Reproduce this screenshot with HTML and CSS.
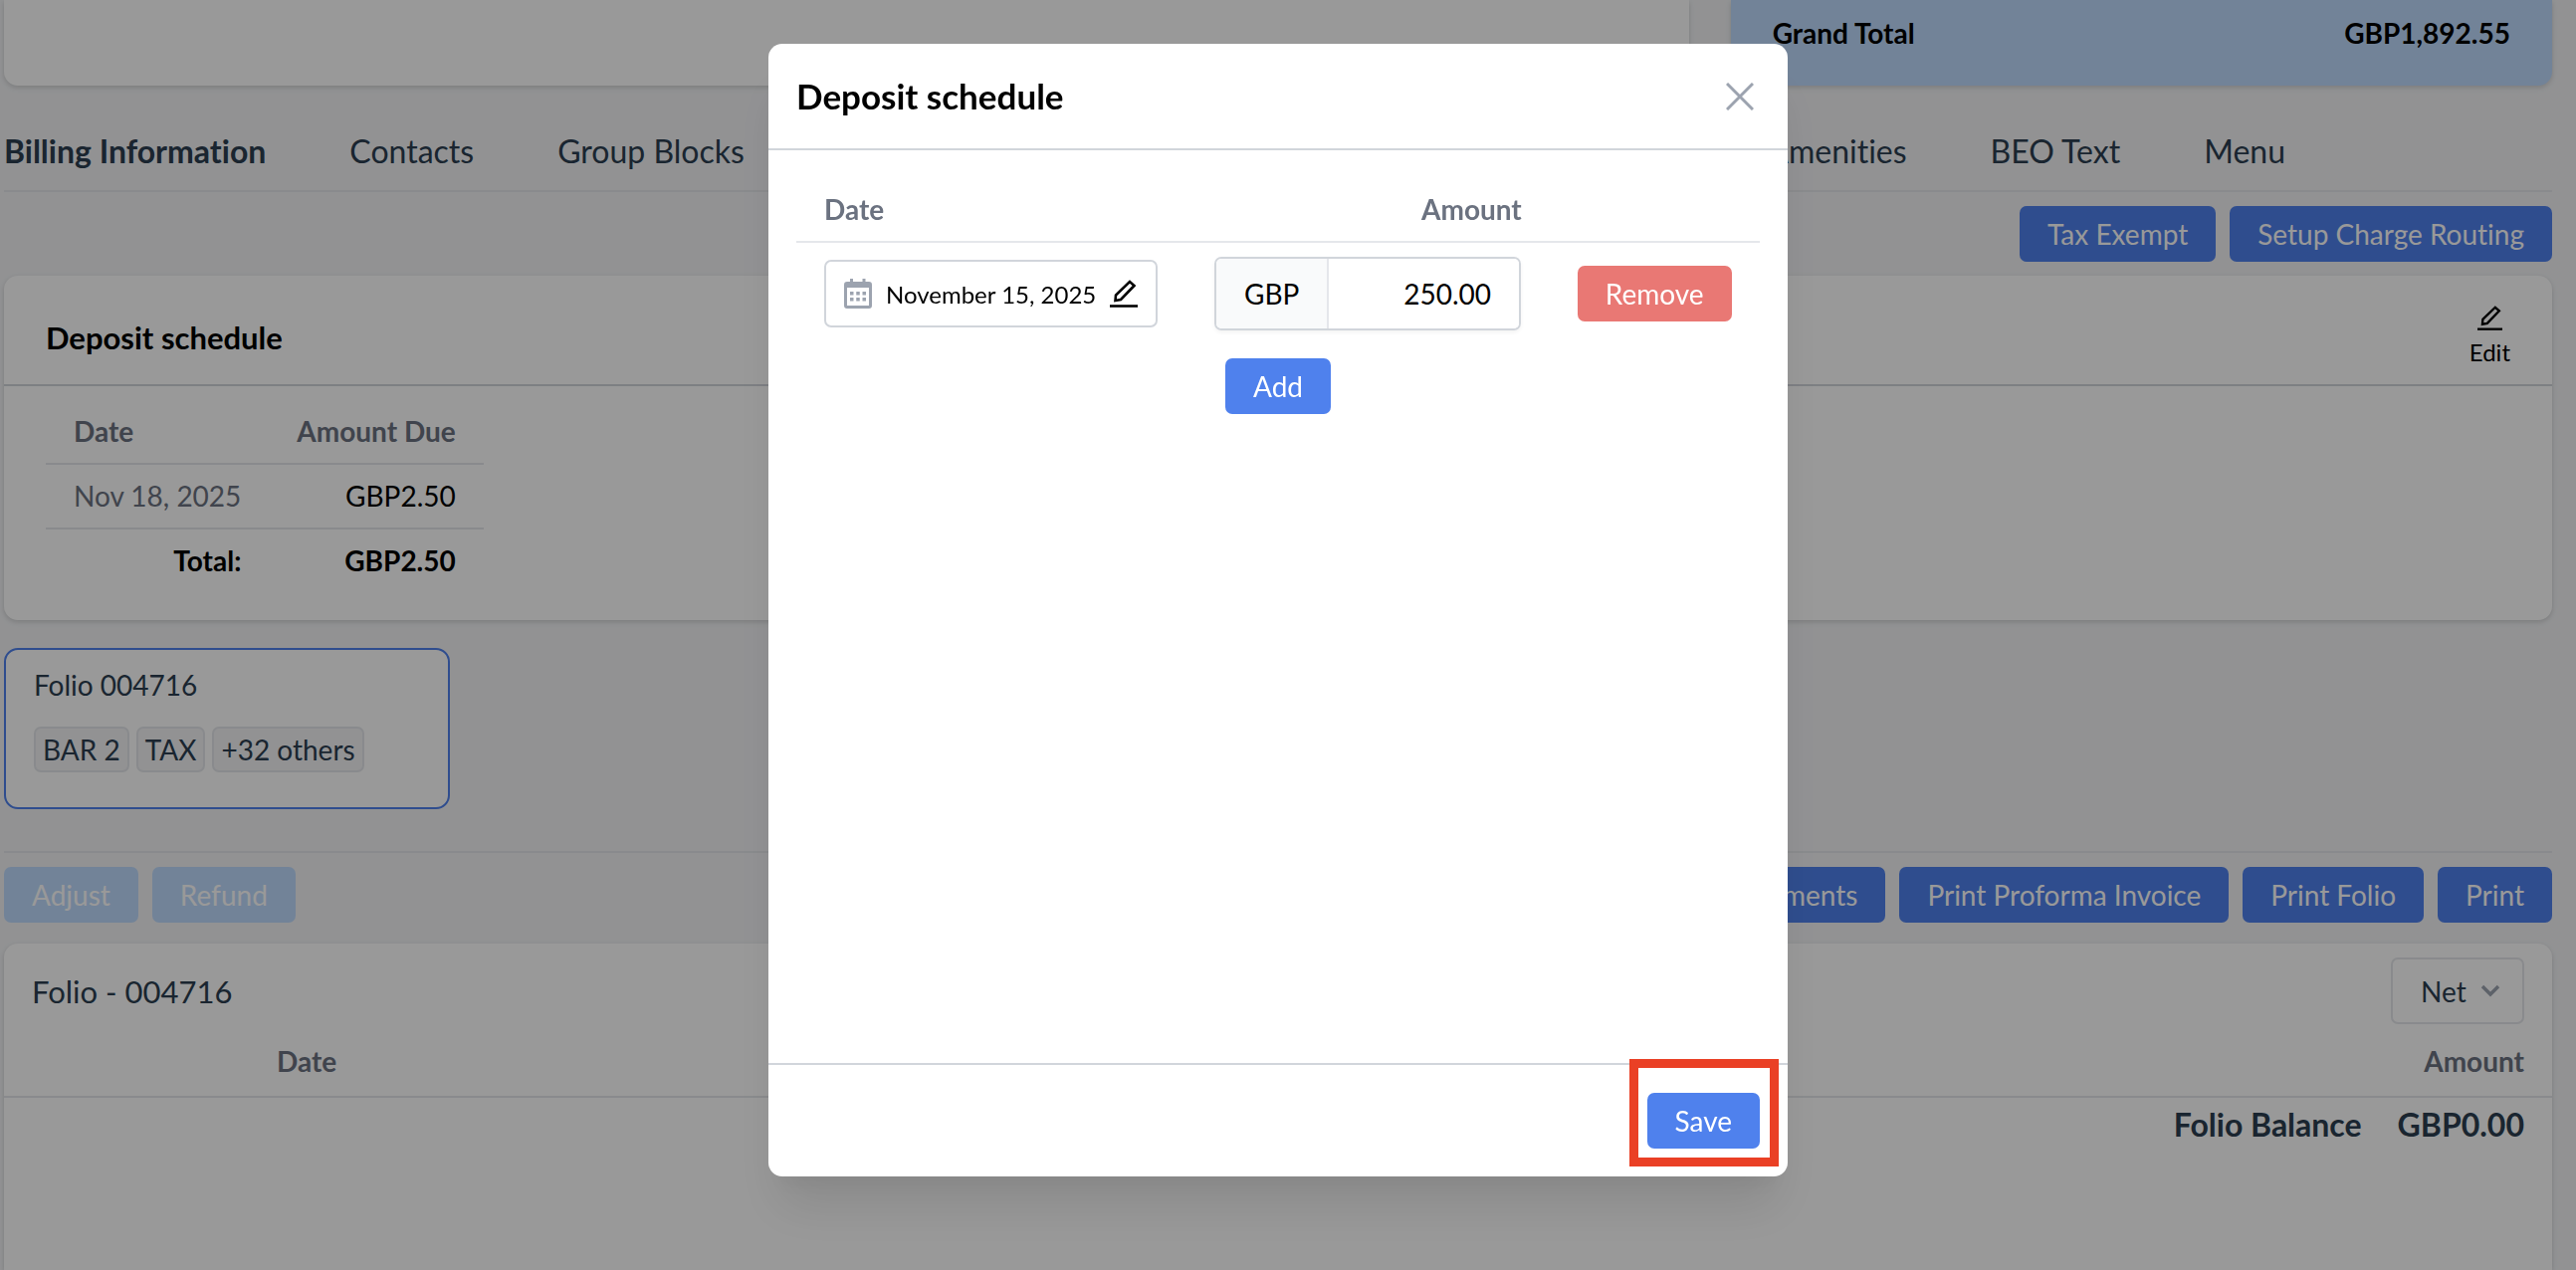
FILE: index.html
```html
<!DOCTYPE html>
<html lang="en">
<head>
    <meta charset="UTF-8">
    <meta name="viewport" content="width=device-width, initial-scale=1.0">
    <title>Billing Information</title>
    <link rel="stylesheet" href="styles.css">
</head>
<body>
    <main class="page">
        <section class="summary">
            <div class="card summary-main"></div>
            <div class="card summary-total">
                <span>Grand Total</span>
                <span>GBP1,892.55</span>
            </div>
        </section>

        <nav class="tabs">
            <div class="tab-group">
                <a href="#billing" class="tab active">Billing Information</a>
                <a href="#contacts" class="tab">Contacts</a>
                <a href="#blocks" class="tab">Group Blocks</a>
            </div>
            <div class="tab-group">
                <a href="#amenities" class="tab">Amenities</a>
                <a href="#beo" class="tab">BEO Text</a>
                <a href="#menu" class="tab">Menu</a>
            </div>
        </nav>

        <div class="actions">
            <button type="button" class="btn">Tax Exempt</button>
            <button type="button" class="btn">Setup Charge Routing</button>
        </div>

        <section class="card schedule">
            <header class="schedule-header">
                <h2>Deposit schedule</h2>
                <button type="button" class="edit-btn">
                    <svg class="icon small" viewBox="0 0 28 28" aria-hidden="true">
                        <path d="M5.500 21L6 15.500L20 2L24.500 6L11 20Z" fill="none" stroke="currentColor" stroke-width="2.600"/>
                        <path d="M0 26.500H28" stroke="currentColor" stroke-width="2.600"/>
                    </svg>
                    Edit
                </button>
            </header>
            <div class="schedule-body">
                <table class="table">
                    <thead>
                        <tr><th>Date</th><th class="right">Amount Due</th></tr>
                    </thead>
                    <tbody>
                        <tr><td class="muted">Nov 18, 2025</td><td class="right">GBP2.50</td></tr>
                        <tr class="total"><td class="right">Total:</td><td class="right">GBP2.50</td></tr>
                    </tbody>
                </table>
            </div>
        </section>

        <section class="folio-card">
            <span>Folio 004716</span>
            <div class="tags">
                <span class="tag">BAR 2</span>
                <span class="tag">TAX</span>
                <span class="tag">+32 others</span>
            </div>
        </section>

        <div class="actions folio-actions">
            <button type="button" class="btn" disabled>Adjust</button>
            <button type="button" class="btn push" disabled>Refund</button>
            <button type="button" class="btn">Payments</button>
            <button type="button" class="btn">Print Proforma Invoice</button>
            <button type="button" class="btn">Print Folio</button>
            <button type="button" class="btn">Print</button>
        </div>

        <section class="card folio">
            <header class="folio-header">
                <h3>Folio - 004716</h3>
                <div class="select-wrap">
                    <select class="select" aria-label="Price display">
                        <option>Net</option>
                    </select>
                    <svg class="chevron" viewBox="0 0 20 14" aria-hidden="true">
                        <path d="M2 2L10 10L18 2" fill="none" stroke="currentColor" stroke-width="3.400"/>
                    </svg>
                </div>
            </header>
            <table class="folio-table">
                <thead>
                    <tr><th>Date</th><th class="right">Amount</th></tr>
                </thead>
                <tbody>
                    <tr><td></td><td class="balance">Folio Balance<span class="balance-sum">GBP0.00</span></td></tr>
                </tbody>
            </table>
        </section>
    </main>

    <div class="overlay">
        <div class="modal" role="dialog" aria-labelledby="modal-title">
            <header class="modal-header">
                <h1 id="modal-title">Deposit schedule</h1>
                <button type="button" class="close-btn" aria-label="Close">
                    <svg class="icon" viewBox="0 0 28 28" aria-hidden="true">
                        <path d="M1 1L27 27M27 1L1 27" stroke="currentColor" stroke-width="3"/>
                    </svg>
                </button>
            </header>
            <div class="modal-body">
                <table class="table modal-table">
                    <thead>
                        <tr><th>Date</th><th class="right">Amount</th><th></th></tr>
                    </thead>
                    <tbody>
                        <tr>
                            <td>
                                <button type="button" class="date-btn">
                                    <svg class="icon calendar" viewBox="0 0 28 30" aria-hidden="true">
                                        <path fill="currentColor" fill-rule="evenodd" d="M6 0H9V3H18.500V0H21.500V3H25Q28 3 28 6V27Q28 30 25 30H3Q0 30 0 27V6Q0 3 3 3H6ZM3 9V27H25V9Z"/>
                                        <path fill="currentColor" d="M6 13H9.500V16.500H6ZM12.250 13H15.750V16.500H12.250ZM18.500 13H22V16.500H18.500ZM6 19H9.500V22.500H6ZM12.250 19H15.750V22.500H12.250ZM18.500 19H22V22.500H18.500Z"/>
                                    </svg>
                                    November 15, 2025
                                    <svg class="icon" viewBox="0 0 28 28" aria-hidden="true">
                                        <path d="M5.500 21L6 15.500L20 2L24.500 6L11 20Z" fill="none" stroke="currentColor" stroke-width="2.600"/>
                                        <path d="M0 26.500H28" stroke="currentColor" stroke-width="2.600"/>
                                    </svg>
                                </button>
                            </td>
                            <td>
                                <div class="money">
                                    <label for="amount" class="currency">GBP</label>
                                    <input id="amount" type="text" value="250.00">
                                </div>
                            </td>
                            <td><button type="button" class="btn danger">Remove</button></td>
                        </tr>
                    </tbody>
                </table>
                <button type="button" class="btn add">Add</button>
            </div>
            <footer class="modal-footer">
                <div class="highlight">
                    <button type="button" class="btn">Save</button>
                </div>
            </footer>
        </div>
    </div>
</body>
</html>
```

FILE: styles.css
```css
* {
    box-sizing: border-box;
}

body {
    margin: 0;
    height: 100vh;
    overflow: hidden;
    background: #f3f4f6;
    color: #2c3e50;
    font-family: Lato, sans-serif;
    font-size: 28px;
    line-height: 42px;
    font-variant-ligatures: none;
}

h1, h2, h3 {
    margin: 0;
}

button, input, select {
    font: inherit;
    color: inherit;
}

button {
    cursor: pointer;
}

.page {
    display: flex;
    flex-direction: column;
    min-height: 100vh;
    padding: 0 24px 0 4px;
}

.card {
    background: #fff;
    border-radius: 14px;
    box-shadow: 0 2px 6px rgba(0, 0, 0, 0.1), 0 2px 4px rgba(0, 0, 0, 0.06);
}

.icon {
    display: block;
    flex: none;
    width: 28px;
    height: 28px;
}

.icon.small {
    width: 25px;
    height: 25px;
}

.right {
    text-align: right;
}

/* Summary */
.summary {
    display: grid;
    grid-template-columns: repeat(3, 1fr);
    gap: 42px;
}

.summary .card {
    border-top-left-radius: 0;
    border-top-right-radius: 0;
}

.summary-main {
    grid-column: span 2;
}

.summary-total {
    display: flex;
    justify-content: space-between;
    padding: 12px 42px 32px;
    background: #bfdbfe;
    color: #000;
    font-weight: 700;
}

/* Tabs */
.tabs {
    display: flex;
    justify-content: space-between;
    margin-top: 44px;
    padding: 0 268px 17px 0;
    border-bottom: 2px solid #e5e7eb;
    font-size: 32px;
    line-height: 44px;
}

.tab-group {
    display: flex;
    gap: 84px;
}

.tab {
    color: inherit;
    text-decoration: none;
}

.tab.active {
    font-weight: 700;
}

/* Buttons */
.actions {
    display: flex;
    justify-content: flex-end;
    gap: 14px;
    padding: 14px 0;
}

.btn {
    height: 56px;
    padding: 0 28px;
    border: 0;
    border-radius: 7px;
    background: #4f81ed;
    color: #fff;
}

.btn:disabled {
    background: #bfdbfe;
}

.btn.danger {
    background: #e97874;
}

/* Deposit schedule card */
.schedule {
    color: #000;
}

.schedule-header {
    display: flex;
    align-items: center;
    justify-content: space-between;
    height: 111px;
    padding: 14px 42px 0;
    border-bottom: 2px solid #d1d5db;
}

.schedule-header h2 {
    font-size: 31px;
}

.edit-btn {
    display: flex;
    flex-direction: column;
    align-items: center;
    gap: 4px;
    padding: 0;
    border: 0;
    background: none;
    font-size: 24px;
    line-height: 35px;
}

.schedule-body {
    padding: 14px 42px 28px;
}

.table {
    border-collapse: collapse;
    line-height: 35px;
}

.table th,
.table td {
    padding: 14px 28px;
    border-bottom: 2px solid #e5e7eb;
}

.table th {
    color: #6b7280;
}

.table th:not(.right) {
    text-align: left;
}

.table tbody tr:last-child td {
    border-bottom: 0;
}

.muted {
    color: #6b7280;
}

.total {
    font-weight: 700;
}

/* Folio picker */
.folio-card {
    display: flex;
    flex-direction: column;
    gap: 21px;
    width: 448px;
    margin: 28px 0 42px;
    padding: 14px 28px 35px;
    border: 2px solid #4f81ed;
    border-radius: 14px;
    background: #fff;
}

.tags {
    display: flex;
    gap: 7px;
}

.tag {
    padding: 0 7px;
    border: 2px solid #e5e7eb;
    border-radius: 7px;
    background: #f3f4f6;
}

.folio-actions {
    padding-bottom: 21px;
    border-top: 2px solid #e5e7eb;
}

.push {
    margin-right: auto;
}

/* Folio */
.folio {
    flex: 1;
    border-bottom-left-radius: 0;
    border-bottom-right-radius: 0;
}

.folio-header {
    display: flex;
    align-items: center;
    justify-content: space-between;
    padding: 14px 28px 0;
}

.folio-header h3 {
    font-size: 31px;
    font-weight: 400;
}

.select-wrap {
    position: relative;
}

.select {
    display: block;
    height: 67px;
    padding: 0 56px 0 28px;
    border: 2px solid #e5e7eb;
    border-radius: 7px;
    background: #fff;
    appearance: none;
}

.chevron {
    position: absolute;
    top: 27px;
    right: 24px;
    width: 20px;
    height: 14px;
    color: #9ca3af;
    pointer-events: none;
}

.folio-table {
    width: 100%;
    border-collapse: collapse;
}

.folio-table th {
    padding: 16px 28px 14px;
    border-bottom: 2px solid #e5e7eb;
    color: #6b7280;
}

.folio-table th:first-child {
    padding-left: 274px;
    text-align: left;
}

.balance {
    padding: 6px 28px;
    font-size: 32px;
    font-weight: 700;
    text-align: right;
}

.balance-sum {
    margin-left: 36px;
}

/* Modal */
.overlay {
    position: fixed;
    inset: 0;
    display: flex;
    justify-content: center;
    padding: 44px 24px 94px 4px;
    background: rgba(0, 0, 0, 0.4);
}

.modal {
    display: flex;
    flex-direction: column;
    width: 100%;
    max-width: 1024px;
    border-radius: 14px;
    background: #fff;
    color: #000;
    box-shadow: 0 40px 50px -10px rgba(0, 0, 0, 0.1), 0 20px 20px -10px rgba(0, 0, 0, 0.04);
}

.modal-header {
    display: flex;
    align-items: center;
    justify-content: space-between;
    padding: 28px;
    border-bottom: 2px solid #d1d5db;
}

.modal-header h1 {
    font-size: 35px;
    line-height: 49px;
}

.close-btn {
    padding: 0 6px;
    border: 0;
    background: none;
    color: #9ca3af;
}

.modal-body {
    display: flex;
    flex: 1;
    flex-direction: column;
    align-items: center;
    gap: 14px;
    padding: 28px;
}

.modal-table {
    width: 100%;
}

.date-btn {
    display: flex;
    align-items: center;
    gap: 14px;
    height: 68px;
    padding: 0 18px;
    border: 2px solid #d1d5db;
    border-radius: 7px;
    background: #fff;
    font-size: 24px;
    white-space: nowrap;
}

.calendar {
    height: 30px;
    color: #9ca3af;
}

.money {
    display: flex;
    width: 308px;
    height: 74px;
    border: 2px solid #d1d5db;
    border-radius: 7px;
    box-shadow: 0 2px 4px rgba(0, 0, 0, 0.05);
    overflow: hidden;
}

.currency {
    display: flex;
    align-items: center;
    padding: 0 28px;
    border-right: 2px solid #e5e7eb;
    background: #f9fafb;
}

.money input {
    flex: 1;
    min-width: 0;
    padding: 0 28px;
    border: 0;
    background: #fff;
    text-align: right;
}

.modal-footer {
    display: flex;
    justify-content: flex-end;
    padding: 28px;
    border-top: 2px solid #d1d5db;
}

.highlight {
    position: relative;
    display: flex;
}

/* Callout frame around the save button */
.highlight::after {
    content: "";
    position: absolute;
    inset: -34px -19px -18px -18px;
    border: 9px solid #ea4025;
    pointer-events: none;
}
```
